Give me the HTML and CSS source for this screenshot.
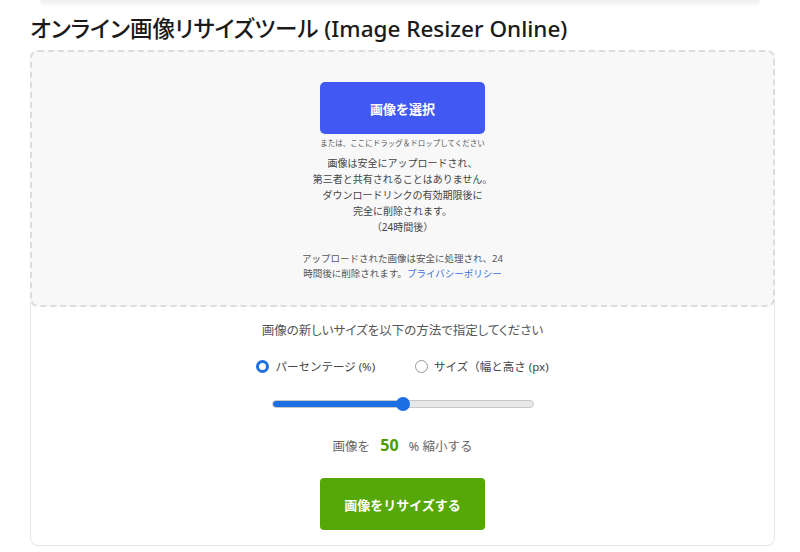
FILE: index.html
```html
<!DOCTYPE html>
<html lang="ja">
<head>
    <meta charset="UTF-8">
    <meta name="viewport" content="width=device-width, initial-scale=1.0">
    <title>オンライン画像リサイズツール</title>
    <link rel="stylesheet" href="styles.css">
</head>
<body>
    <div class="top-shade"></div>
    <div class="page">
        <h1>オンライン画像リサイズツール (Image Resizer Online)</h1>
        <div class="card">
            <div class="dropzone">
                <button class="btn btn-select">画像を選択</button>
                <p class="drop-note">または、ここにドラッグ＆ドロップしてください</p>
                <p class="safe-note">
                    画像は安全にアップロードされ、<br>
                    第三者と共有されることはありません。<br>
                    ダウンロードリンクの有効期限後に<br>
                    完全に削除されます。<br>
                    （24時間後）
                </p>
                <p class="privacy-note">
                    アップロードされた画像は安全に処理され、24<br>
                    時間後に削除されます。<a href="#">プライバシーポリシー</a>
                </p>
            </div>
            <div class="options">
                <p class="options-title">画像の新しいサイズを以下の方法で指定してください</p>
                <div class="modes">
                    <label class="mode"><input type="radio" name="mode" checked> パーセンテージ (%)</label>
                    <label class="mode"><input type="radio" name="mode"> サイズ（幅と高さ (px)</label>
                </div>
                <input type="range" class="slider" id="percent" min="1" max="99" value="50">
                <p class="result">画像を <span class="percent" id="percentValue">50</span> % 縮小する</p>
                <button class="btn btn-resize">画像をリサイズする</button>
            </div>
        </div>
    </div>
    <script>
        const slider = document.getElementById('percent');
        function updateSlider() {
            const pct = (slider.value - slider.min) / (slider.max - slider.min) * 100;
            slider.style.background = `linear-gradient(to right, #1c6fe3 ${pct}%, #e8e8e8 ${pct}%)`;
            document.getElementById('percentValue').textContent = slider.value;
        }
        slider.addEventListener('input', updateSlider);
        updateSlider();
    </script>
</body>
</html>
```

FILE: styles.css
```css
body {
    margin: 0;
    font-family: "Noto Sans", "Noto Sans CJK JP", sans-serif;
    background: #fff;
    color: #333;
}
.top-shade {
    height: 8px;
    margin: 0 40px;
    background: linear-gradient(#efefef, rgba(250, 250, 250, 0));
    border-radius: 0 0 8px 8px;
}
.page {
    padding: 0 25px 0 30px;
}
h1 {
    margin: 5px 0 0;
    font-size: 22.5px;
    line-height: 32px;
    font-weight: 500;
    color: #1a1a1a;
    font-feature-settings: "palt";
}
.card {
    margin-top: 5px;
    border: 1px solid #e6e6e6;
    border-top: none;
    border-radius: 8px;
    text-align: center;
}
.dropzone {
    height: 223px;
    padding-top: 30px;
    background: #f8f8f9;
    border: 2px dashed #dcdcdf;
    border-radius: 8px;
    margin: 0 -1px;
}
.btn {
    width: 165px;
    height: 52px;
    border: none;
    border-radius: 5px;
    color: #fff;
    font-family: inherit;
    font-weight: bold;
    cursor: pointer;
}
.btn-select {
    background: #4159f2;
    font-size: 13px;
}
.drop-note {
    margin: 4px 0 0;
    font-size: 7.5px;
    line-height: 10px;
    color: #555;
}
.safe-note {
    margin: 7px 0 0;
    font-size: 10px;
    line-height: 16px;
    color: #444;
}
.privacy-note {
    margin: 16px 0 0;
    font-size: 9.5px;
    line-height: 15px;
    color: #555;
}
.privacy-note a {
    color: #3b6fd8;
    text-decoration: none;
}
.options {
    padding: 14px 0 15px;
}
.options-title {
    margin: 0;
    font-size: 12.5px;
    line-height: 20px;
    color: #555;
    font-feature-settings: "palt";
}
.modes {
    display: flex;
    justify-content: center;
    gap: 40px;
    margin-top: 15px;
    height: 20px;
    align-items: center;
}
.mode {
    display: flex;
    align-items: center;
    gap: 6px;
    font-size: 11.5px;
    color: #444;
}
.mode input {
    appearance: none;
    width: 13px;
    height: 13px;
    margin: 0;
    border: 1px solid #999;
    border-radius: 50%;
    background: #fff;
}
.mode input:checked {
    border: 3.5px solid #1c6fe3;
}
.slider {
    -webkit-appearance: none;
    appearance: none;
    display: block;
    width: 260px;
    height: 6px;
    margin: 24px auto 0;
    border: 1px solid #c8c8c8;
    border-radius: 4px;
    background: #e8e8e8;
}
.slider::-webkit-slider-thumb {
    -webkit-appearance: none;
    width: 14px;
    height: 14px;
    border-radius: 50%;
    background: #1c6fe3;
    border: none;
}
.result {
    margin: 27px 0 0;
    font-size: 12.5px;
    line-height: 20px;
    color: #666;
}
.percent {
    display: inline-block;
    margin: 0 7px;
    font-size: 16px;
    font-weight: bold;
    color: #4a9c00;
}
.btn-resize {
    margin-top: 21px;
    background: #55a807;
    font-size: 13px;
    border-radius: 4px;
}
```
